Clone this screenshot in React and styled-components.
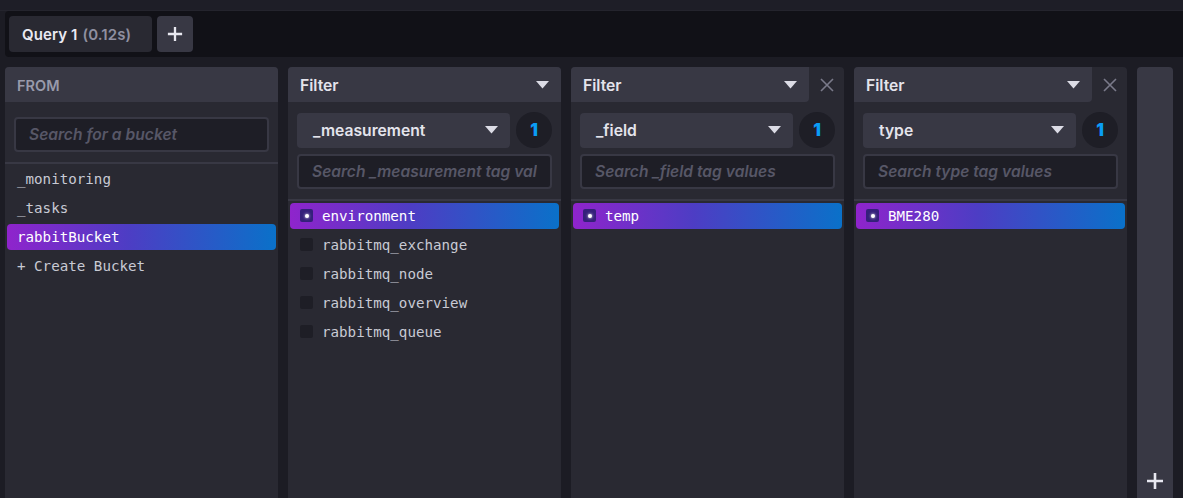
import styled, { createGlobalStyle } from 'styled-components';

const GlobalStyle = createGlobalStyle`
  body {
    margin: 0;
    background-color: #1c1c24;
    font-family: Inter, Roboto, "Noto Sans", sans-serif;
    overflow: hidden;
  }
`;

const TopStrip = styled.div`
  height: 10px;
  background-color: #1e1e27;
  border-bottom: 1px solid #24242d;
`;

const QueryBar = styled.div`
  margin-left: 5px;
  height: 46px;
  background-color: #111117;
  border-radius: 4px 0 0 4px;
  display: flex;
  align-items: center;
  gap: 5px;
  padding: 0 4px;
`;

const QueryTab = styled.div`
  width: 143px;
  height: 36px;
  box-sizing: border-box;
  padding-left: 13px;
  display: flex;
  align-items: center;
  background-color: #292932;
  border-radius: 4px;
  font-size: 15px;
  font-weight: 600;
  letter-spacing: 0.1px;
  color: #eaeaf2;
`;

const Time = styled.span`
  color: #8f8fa0;
  margin-left: 5px;
`;

const AddTab = styled.div`
  width: 36px;
  height: 36px;
  border-radius: 4px;
  background-color: #383844;
  display: flex;
  align-items: center;
  justify-content: center;
`;

const Columns = styled.div`
  display: flex;
  gap: 10px;
  padding: 10px 10px 0 5px;
`;

const Panel = styled.div`
  width: 273px;
  height: 445px;
  background-color: #292932;
  border-radius: 4px;
  display: flex;
  flex-direction: column;
  overflow: hidden;
`;

const Header = styled.div`
  height: 35px;
  display: flex;
  flex-shrink: 0;
  background-color: ${p => (p.$split ? 'transparent' : '#383844')};
`;

const HeaderLabel = styled.div`
  flex: 1;
  display: flex;
  align-items: center;
  justify-content: space-between;
  padding: 1px 12px 0;
  font-size: ${p => (p.$muted ? '14.5px' : '15.7px')};
  font-weight: 600;
  color: ${p => (p.$muted ? '#999aab' : '#e4e4ec')};
  background-color: #383844;
  border-radius: ${p => (p.$split ? '0 0 4px 0' : '0')};
`;

const CloseButton = styled.div`
  width: 35px;
  display: flex;
  align-items: center;
  justify-content: center;
`;

const Controls = styled.div`
  padding: ${p => (p.$from ? '15px 9px 10px' : '10px 9px 10px')};
  display: flex;
  flex-direction: column;
  gap: 6px;
  border-bottom: 2px solid #383844;
`;

const SelectRow = styled.div`
  display: flex;
  align-items: center;
  gap: 6px;
`;

const Select = styled.div`
  flex: 1;
  height: 35px;
  border-radius: 4px;
  background-color: #383844;
  display: flex;
  align-items: center;
  justify-content: space-between;
  padding: 0 12px 0 16px;
  font-size: 15.7px;
  font-weight: 600;
  color: #e4e4ec;
`;

const Badge = styled.div`
  width: 36px;
  height: 36px;
  border-radius: 50%;
  background-color: #1e1e26;
  display: flex;
  align-items: center;
  justify-content: center;
  color: #0a9cf5;
  font-weight: 900;
  font-size: 17px;
`;

const SearchInput = styled.input`
  height: 35px;
  box-sizing: border-box;
  width: 100%;
  border: 2px solid #383844;
  border-radius: 4px;
  background-color: #1e1e26;
  padding: 0 13px;
  font-family: Inter, Roboto, sans-serif;
  font-style: italic;
  font-weight: 600;
  font-size: 15.6px;
  color: #e4e4ec;
  outline: none;

  &::placeholder {
    color: #575767;
  }
`;

const List = styled.div`
  display: flex;
  flex-direction: column;
`;

const Item = styled.div`
  height: 26px;
  margin: 1.5px 2px;
  border-radius: 4px;
  display: flex;
  align-items: center;
  gap: 9px;
  padding-left: 10px;
  font-family: "DejaVu Sans Mono", "Liberation Mono", monospace;
  font-size: 14.2px;
  color: ${p => (p.$active ? '#ffffff' : '#c8cad4')};
  background: ${p =>
    p.$active ? 'linear-gradient(90deg, #8f24cc 0%, #4d3dc4 45%, #0a71c9 100%)' : 'transparent'};
`;

const Check = styled.span`
  width: 13px;
  height: 13px;
  border-radius: 2px;
  background-color: ${p => (p.$on ? '#34207a' : '#1e1e26')};
  display: flex;
  align-items: center;
  justify-content: center;

  &::after {
    content: '';
    display: ${p => (p.$on ? 'block' : 'none')};
    width: 4px;
    height: 4px;
    border-radius: 50%;
    background-color: #ffffff;
    box-shadow: 0 0 3px #ffffff;
  }
`;

const AddColumn = styled.div`
  width: 36px;
  height: 445px;
  background-color: #383844;
  border-radius: 4px;
  display: flex;
  align-items: flex-end;
  justify-content: center;
  padding-bottom: 22px;
  box-sizing: border-box;
`;

const Caret = () => (
  <svg width="13" height="8" viewBox="0 0 13 8">
    <path d="M0 0 H13 L6.5 7.5 Z" fill="#dcdce6" />
  </svg>
);

const Plus = ({ size = 18, color = '#e8e8f0' }) => (
  <svg width={size} height={size} viewBox="0 0 18 18">
    <path d="M9 1 V17 M1 9 H17" stroke={color} strokeWidth="2.6" />
  </svg>
);

const Cross = () => (
  <svg width="14" height="14" viewBox="0 0 14 14">
    <path d="M1 1 L13 13 M13 1 L1 13" stroke="#7a7a8a" strokeWidth="1.6" />
  </svg>
);

const filters = [
  {
    key: '_measurement',
    closable: false,
    values: ['environment', 'rabbitmq_exchange', 'rabbitmq_node', 'rabbitmq_overview', 'rabbitmq_queue'],
  },
  { key: '_field', closable: true, values: ['temp'] },
  { key: 'type', closable: true, values: ['BME280'] },
];

function FilterPanel({ filter }) {
  return (
    <Panel>
      <Header $split={filter.closable}>
        <HeaderLabel $split={filter.closable}>
          Filter
          <Caret />
        </HeaderLabel>
        {filter.closable && (
          <CloseButton>
            <Cross />
          </CloseButton>
        )}
      </Header>
      <Controls>
        <SelectRow>
          <Select>
            {filter.key}
            <Caret />
          </Select>
          <Badge>1</Badge>
        </SelectRow>
        <SearchInput placeholder={`Search ${filter.key} tag values`} />
      </Controls>
      <List>
        {filter.values.map((v, i) => (
          <Item key={v} $active={i === 0}>
            <Check $on={i === 0} />
            {v}
          </Item>
        ))}
      </List>
    </Panel>
  );
}

export default function App() {
  const buckets = ['_monitoring', '_tasks', 'rabbitBucket', '+ Create Bucket'];
  return (
    <>
      <GlobalStyle />
      <TopStrip />
      <QueryBar>
        <QueryTab>
          Query 1 <Time>(0.12s)</Time>
        </QueryTab>
        <AddTab>
          <Plus size={16} />
        </AddTab>
      </QueryBar>
      <Columns>
        <Panel>
          <Header>
            <HeaderLabel $muted>FROM</HeaderLabel>
          </Header>
          <Controls $from>
            <SearchInput placeholder="Search for a bucket" />
          </Controls>
          <List>
            {buckets.map(b => (
              <Item key={b} $active={b === 'rabbitBucket'}>
                {b}
              </Item>
            ))}
          </List>
        </Panel>
        {filters.map(f => (
          <FilterPanel key={f.key} filter={f} />
        ))}
        <AddColumn>
          <Plus size={18} />
        </AddColumn>
      </Columns>
    </>
  );
}
